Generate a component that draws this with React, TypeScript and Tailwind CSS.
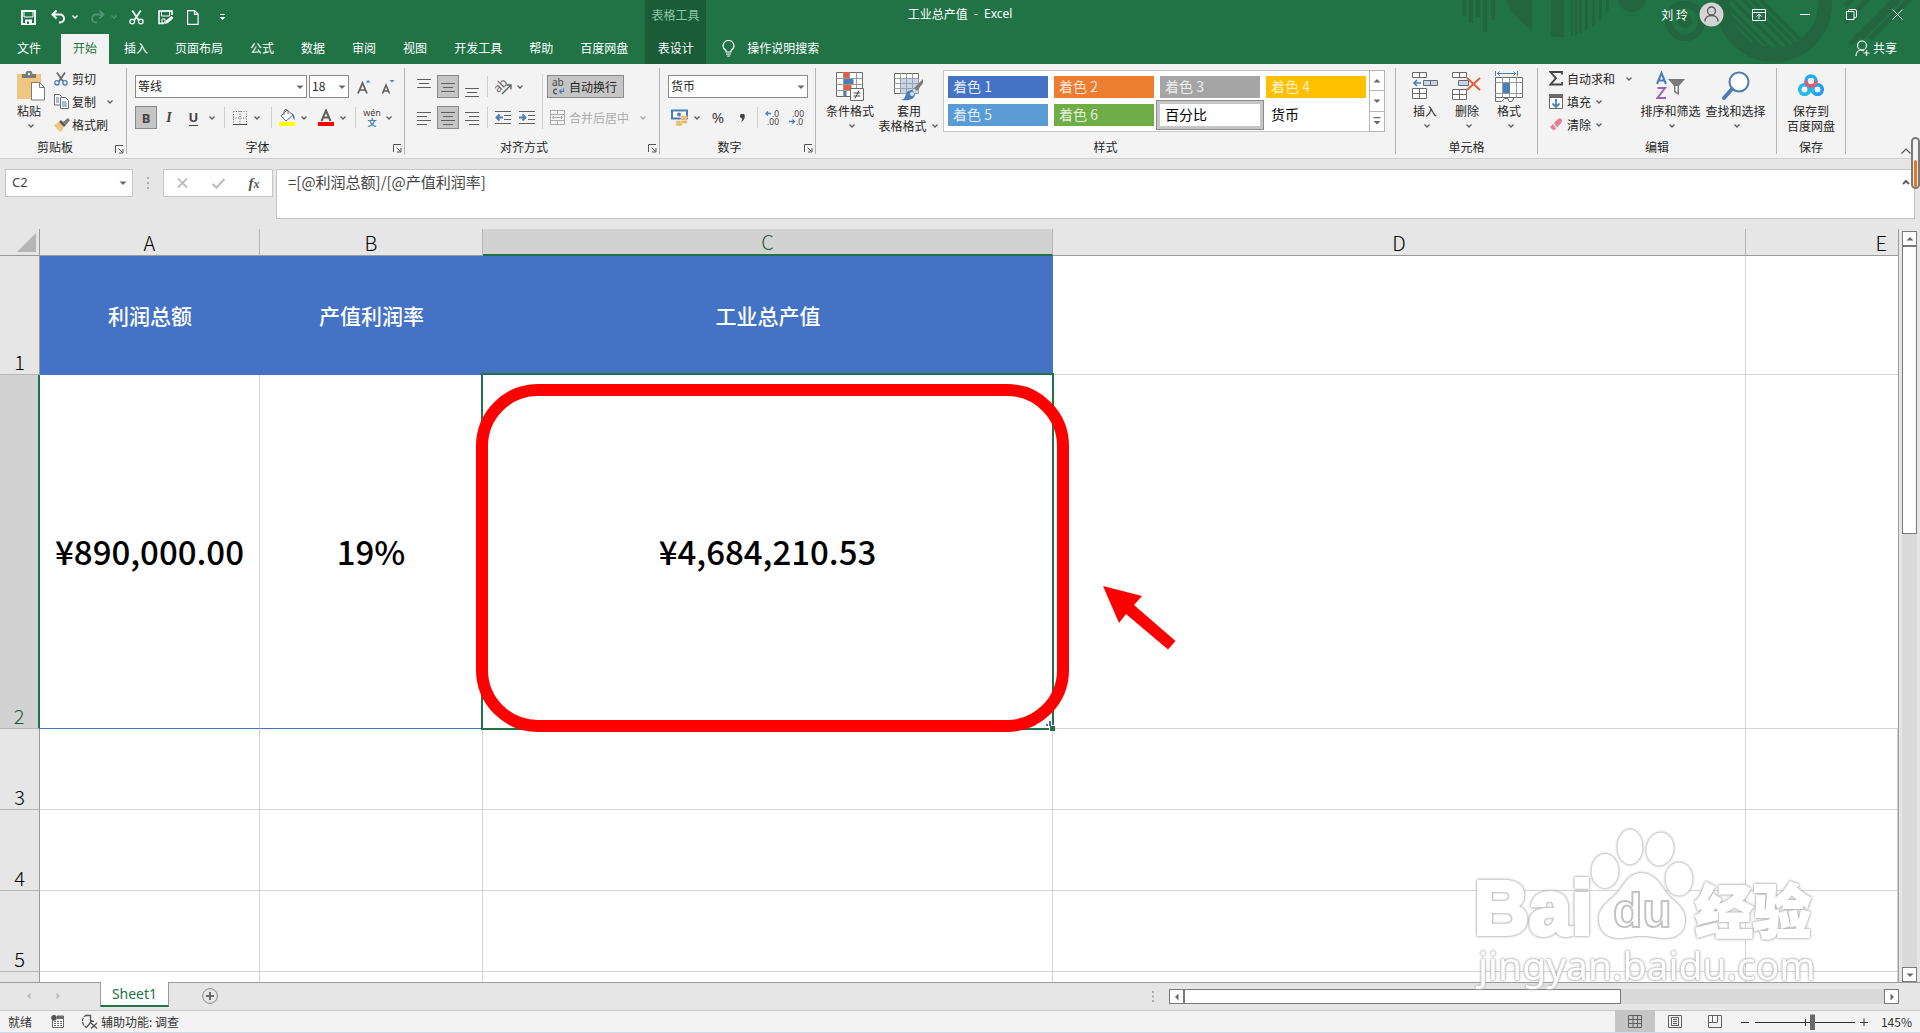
import React from "react";

type Kids = { children?: React.ReactNode; className?: string };

const GRAY = "#6a6a6a";
const BLUE = "#4a7fb5";

function Chev({ className = "", color = "#5f5f5f" }: { className?: string; color?: string }) {
  return (
    <svg width="10" height="6" viewBox="0 0 10 6" className={"shrink-0 " + className} aria-hidden="true">
      <path d="M2.5 1.5 5 4l2.5-2.5" fill="none" stroke={color} strokeWidth="1.3" />
    </svg>
  );
}

function Tri({ dir = "down", color = "#6a6a6a" }: { dir?: "down" | "up" | "left" | "right"; color?: string }) {
  const d = {
    down: "M0.5 2.5h7L4 6z",
    up: "M0.5 5.5h7L4 2z",
    left: "M5.5 0.5v7L2 4z",
    right: "M2.5 0.5v7L6 4z",
  }[dir];
  return (
    <svg width="8" height="8" viewBox="0 0 8 8" className="shrink-0" aria-hidden="true">
      <path d={d} fill={color} />
    </svg>
  );
}

function TinySep({ className = "" }: { className?: string }) {
  return <span className={"h-[21px] w-px shrink-0 bg-[#d0d0d0] " + className} />;
}

function Group({ label, width, launcher, children }: { label: string; width: string; launcher?: boolean; children: React.ReactNode }) {
  return (
    <section aria-label={label} className={"flex shrink-0 " + width}>
      <div className="flex min-w-0 flex-1 flex-col">
        <div className="flex h-[72px] items-start">{children}</div>
        <div className="flex h-[23px] items-center">
          <span className="flex-1 text-center">{label}</span>
          {launcher && (
            <button aria-label={label + "设置"} className="flex w-4 items-center justify-end pt-1 pr-[2px]">
              <svg width="9" height="9" viewBox="0 0 9 9">
                <path d="M0.5 8V0.5H8M3.5 3.5l4 4M8 4v4H4" fill="none" stroke="#555" />
              </svg>
            </button>
          )}
        </div>
      </div>
      <span className="mt-1 h-[86px] w-px bg-[#b5b5b5]" />
    </section>
  );
}

function BigButton({ icon, label, second, width, chev = true }: { icon: React.ReactNode; label: string; second?: string; width: string; chev?: boolean }) {
  return (
    <button className={"flex flex-col items-center pt-[7px] leading-[15px] whitespace-nowrap " + width}>
      <span className="flex h-8 items-start justify-center">{icon}</span>
      <span>{label}</span>
      <span className="flex h-[15px] items-center justify-center">
        {second}
        {chev && <Chev className="ml-[3px]" />}
      </span>
    </button>
  );
}

function SmallButton({ icon, label, chev }: { icon: React.ReactNode; label: string; chev?: string }) {
  return (
    <button className="flex h-[23px] items-center whitespace-nowrap">
      <span className="flex w-[18px] items-center">{icon}</span>
      <span>{label}</span>
      {chev && <Chev className={chev} />}
    </button>
  );
}

function IconBtn({ label, active, className = "w-[22px]", children }: Kids & { label: string; active?: boolean }) {
  return (
    <button
      aria-label={label}
      className={
        "flex h-[23px] shrink-0 items-center justify-center " +
        className +
        (active ? " border border-[#8a8a8a] bg-[#c5c5c5]" : "")
      }
    >
      {children}
    </button>
  );
}

function Lines({ rows, stroke = "#5f5f5f" }: { rows: [number, number, number][]; stroke?: string }) {
  return (
    <svg width="14" height="20" viewBox="0 0 14 20">
      {rows.map(([x1, x2, y]) => (
        <path key={y} d={`M${x1} ${y}H${x2}`} stroke={stroke} />
      ))}
    </svg>
  );
}

const Scissors = ({ c1, c2, size = 15 }: { c1: string; c2: string; size?: number }) => (
  <svg width={size} height={size} viewBox="0 0 15 15" fill="none">
    <path d="M3.2 0.5 9.6 10M11.8 0.5 5.4 10" stroke={c1} strokeWidth="1.9" />
    <circle cx="3.2" cy="11.6" r="2.3" stroke={c2} strokeWidth="1.4" />
    <circle cx="11.8" cy="11.6" r="2.3" stroke={c2} strokeWidth="1.4" />
  </svg>
);

function TitleArt() {
  return (
    <svg className="pointer-events-none absolute top-0 right-0" width="470" height="64" viewBox="0 0 470 64" fill="none" aria-hidden="true">
      <defs>
        <clipPath id="disc"><circle cx="110" cy="-20" r="57" /></clipPath>
        <clipPath id="ringInside"><circle cx="324" cy="4" r="45" /></clipPath>
      </defs>
      <g fill="#226540">
        <path d="M12 0h4v16h-4zM19 0h4v23h-4zM26 0h4v17h-4zM33 0h4v32h-4zM41 0h4v20h-4z" />
        <g clipPath="url(#disc)">
          <path d="M56 0h26v40H56zM101 0h13v40h-13zM121 0h2v40h-2zM125 0h2v40h-2zM129 0h3v40h-3zM135 0h3v40h-3zM142 0h3v40h-3zM149 0h3v40h-3zM156 0h3v40h-3z" />
        </g>
        <circle cx="182" cy="-2" r="14" />
        <circle cx="235" cy="21" r="7" />
      </g>
      <g stroke="#226540">
        <circle cx="235" cy="21" r="16.500" strokeWidth="7" />
        <circle cx="324" cy="4" r="51" strokeWidth="14" />
        <g clipPath="url(#ringInside)" strokeWidth="3.500">
          <path d="M270-2l60 60M281-2l60 60M289-4l60 60M298-4l60 60M307-4l60 60M262-2l60 60" />
        </g>
        <path d="M395 6l8-8M395 22l24-24M400 44l46-46M411 38l38-38M420 39l45-45" strokeWidth="5" />
      </g>
    </svg>
  );
}

function TitleBar() {
  const tabs = ["插入", "页面布局", "公式", "数据", "审阅", "视图", "开发工具", "帮助", "百度网盘"];
  return (
    <header className="relative shrink-0 bg-[#217346] text-white">
      <TitleArt />
      <div className="relative flex h-[34px]">
        <div className="flex flex-1">
          <div className="flex w-[645px] shrink-0 items-center pl-[21px]">
            <button aria-label="保存" className="w-[30px]">
              <svg width="15" height="15" viewBox="0 0 15 15" fill="none"><path d="M1 1h13v13H1z" stroke="#fff" strokeWidth="1.800" /><path d="M3 1h9v6H3z" stroke="#fff" strokeWidth="1" /><path d="M4 9.500h7V14H4z" fill="#fff" /><path d="M6 11.500h2V14H6z" fill="#217346" /></svg>
            </button>
            <button aria-label="撤消" className="w-[18px]">
              <svg width="15" height="14" viewBox="0 0 15 14" fill="none" stroke="#fff" strokeWidth="2"><path d="M1.500 4.500h7.500a4 4 0 0 1 0 8H8M5.500 0.500l-4 4 4 4" /></svg>
            </button>
            <Chev color="#fff" className="ml-px" />
            <button aria-label="恢复" className="ml-[10px] w-[18px]">
              <svg width="15" height="14" viewBox="0 0 15 14" fill="none" stroke="#4f9470" strokeWidth="1.800"><path d="M13.500 4.500H6a4 4 0 0 0 0 8H7M9.500 0.500l4 4-4 4" /></svg>
            </button>
            <Chev color="#4f9470" className="ml-px" />
            <button aria-label="剪切" className="ml-[10px] w-[29px]"><Scissors c1="#e8f2ec" c2="#e8f2ec" /></button>
            <button aria-label="另存为" className="w-[29px]">
              <svg width="16" height="15" viewBox="0 0 16 15" fill="none"><path d="M6 13.500H1V1h13v4" stroke="#fff" strokeWidth="1.600" /><path d="M3.500 1h8v5h-8zM4 9h3v4H4z" stroke="#fff" /><path d="M7 14l1-3.500L13.500 6 15.500 8 10 13z" fill="#fff" /></svg>
            </button>
            <button aria-label="新建" className="w-[32px]">
              <svg width="12" height="15" viewBox="0 0 12 15" fill="none" stroke="#fff" strokeWidth="1.200"><path d="M0.600 0.600h7l3.500 3.500v10.200H0.600zM7.500 0.600v3.700h3.600" /></svg>
            </button>
            <button aria-label="自定义快速访问工具栏">
              <svg width="7" height="7" viewBox="0 0 7 7" fill="#fff"><path d="M1 0h5v1H1zM0.500 3h6L3.500 6z" /></svg>
            </button>
          </div>
          <div className="flex w-[61px] items-start justify-center bg-[#1a5c38] pt-[6px] leading-[18px] text-[#8fc3a5]">表格工具</div>
        </div>
        <h1 className="flex h-[26px] items-end leading-[24px] whitespace-pre">工业总产值<span className="font-['Noto_Sans']">{"  -  Excel"}</span></h1>
        <div className="flex flex-1 items-start justify-end pt-[2px]">
          <button className="flex h-[25px] items-center whitespace-nowrap">
            刘 玲
            <svg className="ml-[11px]" width="25" height="25" viewBox="0 0 25 25" fill="none"><circle cx="12.500" cy="12.500" r="12" fill="#d4d4d4" /><circle cx="12.500" cy="9" r="4" stroke="#555" strokeWidth="1.300" /><path d="M6 19.500c0-4 3-6 6.500-6s6.500 2 6.500 6" stroke="#555" strokeWidth="1.300" /></svg>
          </button>
          <button aria-label="功能区显示选项" className="ml-[18px] flex h-[25px] w-[34px] items-center justify-center"><svg width="14" height="12" viewBox="0 0 14 12" fill="none" stroke="#fff"><path d="M0.500 0.500h13v11H0.500zM0.500 3.500h13M7 10V5.500M4.500 7.500 7 5l2.500 2.500" /></svg></button>
          <button aria-label="最小化" className="ml-[12px] flex h-[25px] w-[34px] items-center justify-center"><svg width="10" height="2" viewBox="0 0 10 2"><path d="M0 0h10v1H0z" fill="#fff" /></svg></button>
          <button aria-label="还原" className="ml-[12px] flex h-[25px] w-[34px] items-center justify-center"><svg width="11" height="11" viewBox="0 0 11 11" fill="none" stroke="#fff"><path d="M0.500 2.500h7.500v8H0.500zM2.500 2.500V1.500a1 1 0 0 1 1-1h5.500a1.500 1.500 0 0 1 1.500 1.500v5.500a1 1 0 0 1-1 1H8" /></svg></button>
          <button aria-label="关闭" className="mr-[6px] ml-[12px] flex h-[25px] w-[34px] items-center justify-center"><svg width="11" height="11" viewBox="0 0 11 11" stroke="#fff"><path d="M0.500 0.500l10 10M10.500 0.500l-10 10" /></svg></button>
        </div>
      </div>
      <nav className="relative flex h-[30px] items-stretch leading-[26px] whitespace-nowrap">
        <button className="mr-2 ml-[5px] px-3 pb-[2px]">文件</button>
        <button className="mr-[3px] bg-[#f3f3f3] px-3 pb-[2px] text-[#217346]">开始</button>
        {tabs.map((t) => (
          <button key={t} className="mr-[3px] px-3 pb-[2px]">{t}</button>
        ))}
        <button className="ml-[2px] w-[61px] bg-[#1a5c38] px-3 pb-[2px]">表设计</button>
        <button className="ml-4 flex items-center pb-px">
          <svg width="13" height="17" viewBox="0 0 13 17" fill="none" stroke="#fff" strokeWidth="1.200"><path d="M4 12v-1.500C2.500 9.500 1 8 1 6a5.500 5.500 0 0 1 11 0c0 2-1.500 3.500-3 4.500V12zM4 14h5M5 16h3" /></svg>
          <span className="ml-3 pb-px">操作说明搜索</span>
        </button>
        <span className="flex-1" />
        <button className="mr-[23px] flex items-center pb-px">
          <svg width="15" height="17" viewBox="0 0 15 17" fill="none" stroke="#fff" strokeWidth="1.200"><circle cx="7" cy="5.500" r="4.500" /><path d="M1 16c0-4 2-6 6-6l2 1M11.500 10v6M8.500 13h6" /></svg>
          <span className="ml-[3px] pb-px">共享</span>
        </button>
      </nav>
    </header>
  );
}

function ClipboardGroup() {
  return (
    <Group label="剪贴板" width="w-[127px]" launcher>
      <BigButton
        width="ml-2 w-[42px]"
        label="粘贴"
        icon={
          <svg className="ml-[3px]" width="28" height="31" viewBox="0 0 28 31" fill="none">
            <path d="M0 3h24v25H0z" fill="#efc780" />
            <path d="M5 7V3h3.500a3.500 3.500 0 0 1 7 0H19v4z" fill="#7a7a7a" />
            <circle cx="12" cy="3" r="1.200" fill="#f3f3f3" />
            <path d="M14.500 11.500h8l5 5v12.500h-13z" fill="#fff" stroke="#7a7a7a" />
            <path d="M22.500 11.500v5h5" stroke="#7a7a7a" />
          </svg>
        }
      />
      <div className="ml-1 flex flex-col pt-[3px]">
        <SmallButton icon={<Scissors c1="#6a6a6a" c2={BLUE} size={14} />} label="剪切" />
        <SmallButton
          chev="ml-[9px]"
          label="复制"
          icon={
            <svg width="15" height="15" viewBox="0 0 15 15" fill="#fff" stroke={GRAY}>
              <path d="M0.500 0.500h5l2 2v8.500h-7z" /><path d="M6.500 3.500h5l3 3v8h-8z" /><path d="M2 4h3M2 6h3M2 8h3M8 8h4M8 10h5M8 12h5" stroke={BLUE} />
            </svg>
          }
        />
        <SmallButton
          label="格式刷"
          icon={
            <svg width="16" height="14" viewBox="0 0 16 14">
              <path d="M0 7l5-3 5 5-3 5C4 13 2 10 0 7z" fill="#efc780" /><path d="M5 4l2-2 5 5-2 2z" fill="#5a5a5a" /><path d="M9 4l5-4 2 2-4 5z" fill="#7a7a7a" />
            </svg>
          }
        />
      </div>
    </Group>
  );
}

function Combo({ label, value, options, width }: { label: string; value: string; options: string[]; width: string }) {
  return (
    <div className={"relative flex h-[23px] items-center border border-[#8a8a8a] bg-white " + width}>
      <select aria-label={label} defaultValue={value} className="h-full w-full appearance-none bg-transparent pr-3 pb-px pl-[2px] leading-[20px] outline-none">
        {options.map((o) => <option key={o}>{o}</option>)}
      </select>
      <span className="pointer-events-none absolute right-[2px]"><Tri /></span>
    </div>
  );
}

function FontGroup() {
  return (
    <Group label="字体" width="w-[278px]" launcher>
      <div className="flex flex-col gap-2 pt-[11px] pl-2">
        <div className="flex items-center">
          <Combo label="字体" value="等线" options={["等线", "宋体"]} width="w-[172px]" />
          <Combo label="字号" value="18" options={["18", "20"]} width="ml-[2px] w-[40px]" />
          <IconBtn label="增大字号" className="ml-[3px] w-[24px]">
            <svg width="14" height="16" viewBox="0 0 14 16"><path d="M1 14.500 5.500 4 10 14.500M2.800 11h5.400" fill="none" stroke="#5f5f5f" strokeWidth="1.700" /><path d="M9 3.500 11 1l2.500 2.500z" fill={BLUE} /></svg>
          </IconBtn>
          <IconBtn label="减小字号" className="w-[24px]">
            <svg width="14" height="16" viewBox="0 0 14 16"><path d="M1.500 14.500 5 6l3.500 8.500M2.800 12h4.400" fill="none" stroke="#5f5f5f" strokeWidth="1.600" /><path d="M8.500 1h5L11 3.500z" fill={BLUE} /></svg>
          </IconBtn>
        </div>
        <div className="flex items-center text-[14px] leading-[20px] text-[#444]">
          <IconBtn label="加粗" active><span className="font-['Noto_Sans'] text-[13px] font-bold">B</span></IconBtn>
          <IconBtn label="倾斜" className="w-[24px]"><span className="font-['Liberation_Serif'] font-bold italic">I</span></IconBtn>
          <IconBtn label="下划线" className="w-[25px]"><span className="border-b border-[#444] font-['Noto_Sans'] text-[13px] leading-[15px] font-bold">U</span></IconBtn>
          <Chev className="ml-px" />
          <TinySep className="ml-[7px]" />
          <IconBtn label="边框" className="ml-[4px] w-[22px]">
            <svg width="14" height="14" viewBox="0 0 14 14" fill="none" stroke={GRAY}><path d="M0.500 0.500h13v13M0.500 0.500v13M7 0v13M0 7h13" strokeDasharray="1 1.500" /><path d="M0 13.500h14" stroke="#444" /></svg>
          </IconBtn>
          <Chev className="ml-px" />
          <TinySep className="ml-[9px]" />
          <IconBtn label="填充颜色" className="ml-[4px] w-[22px]">
            <svg width="17" height="17" viewBox="0 0 17 17"><path d="M8 1 2 7l5 5 7-6z" fill="#fff" stroke="#6a6a6a" /><path d="M5 6V2.500a2 2 0 0 1 4 0V5" fill="none" stroke="#6a6a6a" /><path d="M12 4c4 1 4 5 3.500 7-1-1-2-3-2-5z" fill={BLUE} /><path d="M0 13h16v4H0z" fill="#ff0" /></svg>
          </IconBtn>
          <Chev className="ml-px" />
          <IconBtn label="字体颜色" className="ml-[6px] w-[22px]">
            <svg width="17" height="17" viewBox="0 0 17 17"><path d="M3.500 12 8 1.500 12.500 12M5 8.500h6" fill="none" stroke="#5f5f5f" strokeWidth="2" /><path d="M0 13h16v4H0z" fill="#f00" /></svg>
          </IconBtn>
          <Chev className="ml-px" />
          <TinySep className="ml-[7px]" />
          <IconBtn label="拼音" className="ml-[4px] w-[24px]">
            <span className="flex flex-col items-center"><span className="font-['Noto_Sans'] text-[9px] leading-[10px]">wén</span><span className="text-[9px] leading-[10px] font-bold text-[#4a7fb5]">文</span></span>
          </IconBtn>
          <Chev />
        </div>
      </div>
    </Group>
  );
}

function AlignGroup() {
  const C = "#5f5f5f";
  return (
    <Group label="对齐方式" width="w-[255px]" launcher>
      <div className="flex flex-col gap-2 pt-[11px] pl-2">
        <div className="flex w-[129px] items-center gap-[2px]">
          <IconBtn label="顶端对齐"><Lines rows={[[0, 14, 2.5], [2, 12, 6.5], [0, 14, 10.5]]} /></IconBtn>
          <IconBtn label="垂直居中" active><Lines rows={[[0, 14, 6.5], [2, 12, 10.5], [0, 14, 14.5]]} /></IconBtn>
          <IconBtn label="底端对齐"><Lines rows={[[0, 14, 11.5], [2, 12, 15.5], [0, 14, 19.5]]} /></IconBtn>
          <TinySep className="ml-[2px]" />
          <IconBtn label="方向" className="ml-[2px] w-[22px]">
            <svg width="18" height="17" viewBox="0 0 18 17" fill="none" stroke={C} className="overflow-visible"><text x="0" y="13" transform="rotate(-45 5 9)" fontSize="12" fontFamily="Noto Sans" fill={C} stroke="none">ab</text><path d="M8 16 16.500 7.500M12.500 7H17v4.500" strokeWidth="1.300" /></svg>
          </IconBtn>
          <Chev className="-ml-px" />
        </div>
        <div className="flex items-center gap-[2px]">
          <IconBtn label="左对齐"><Lines rows={[[0, 14, 4.5], [0, 10, 8.5], [0, 14, 12.5], [0, 10, 16.5]]} /></IconBtn>
          <IconBtn label="居中" active><Lines rows={[[0, 14, 4.5], [2, 12, 8.5], [0, 14, 12.5], [2, 12, 16.5]]} /></IconBtn>
          <IconBtn label="右对齐"><Lines rows={[[0, 14, 4.5], [4, 14, 8.5], [0, 14, 12.5], [4, 14, 16.5]]} /></IconBtn>
          <TinySep className="ml-[2px]" />
          <IconBtn label="减少缩进量" className="ml-[2px] w-[22px]"><svg width="16" height="14" viewBox="0 0 16 14" fill="none" stroke={C}><path d="M0 0.500h16M9 4.500h7M9 8.500h7M0 12.500h16" /><path d="M8 6.500H1.500M4.500 3.500l-3 3 3 3" stroke={BLUE} strokeWidth="1.800" /></svg></IconBtn>
          <IconBtn label="增加缩进量"><svg width="16" height="14" viewBox="0 0 16 14" fill="none" stroke={C}><path d="M0 0.500h16M9 4.500h7M9 8.500h7M0 12.500h16" /><path d="M0 6.500h6.500M3.500 3.500l3 3-3 3" stroke={BLUE} strokeWidth="1.800" /></svg></IconBtn>
        </div>
      </div>
      <span className="mt-[10px] h-[55px] w-px shrink-0 bg-[#d0d0d0]" />
      <div className="flex flex-col gap-2 pt-[11px] pl-1">
        <button className="flex h-[23px] w-[77px] items-center border border-[#8a8a8a] bg-[#c5c5c5] pl-1 whitespace-nowrap">
          <svg width="13" height="18" viewBox="0 0 13 18" className="overflow-visible"><text x="0" y="8" fontSize="10" fontFamily="Noto Sans" fill="#444">ab</text><path d="M5 11.500a2.300 2.300 0 1 0 0 4" fill="none" stroke="#444" strokeWidth="1.200" /><path d="M11.500 10.500v3H8M9.500 11.500l-2 2 2 2" fill="none" stroke={BLUE} strokeWidth="1.200" /></svg>
          <span className="ml-1">自动换行</span>
        </button>
        <button disabled className="flex h-[23px] items-center pl-[3px] whitespace-nowrap text-[#ababab]">
          <svg width="15" height="15" viewBox="0 0 15 15" fill="none" stroke="#ababab"><path d="M0.500 0.500h14v14H0.500zM0.500 4.500h14M0.500 10.500h14M7.500 0.500v4M7.500 10.500v4M2.500 7.500h10M4 6 2.500 7.500 4 9M11 6l1.500 1.500L11 9" /></svg>
          <span className="ml-1">合并后居中</span>
          <Chev color="#ababab" className="ml-[9px]" />
        </button>
      </div>
    </Group>
  );
}

function NumberGroup() {
  const Dec = ({ up }: { up?: boolean }) => (
    <svg width="16" height="15" viewBox="0 0 16 15" fontFamily="Noto Sans" fontSize="8.500" fill="#444" className="overflow-visible">
      {up ? <text x="7" y="7">.0</text> : <text x="3" y="7">.00</text>}
      {up ? <text x="2" y="15">.00</text> : <text x="7" y="15">.0</text>}
      <path d={up ? "M6 3.500H1M3 1.500l-2 2 2 2" : "M0 11.500h5.500M3.500 9.500l2 2-2 2"} fill="none" stroke={BLUE} strokeWidth="1.300" />
    </svg>
  );
  return (
    <Group label="数字" width="w-[156px]" launcher>
      <div className="flex flex-col gap-2 pt-[11px] pl-2">
        <Combo label="数字格式" value="货币" options={["货币", "常规"]} width="w-[140px]" />
        <div className="flex items-center">
          <IconBtn label="会计数字格式">
            <svg width="17" height="17" viewBox="0 0 17 17"><path d="M1 1.500h15v8H1z" fill="#fff" stroke={BLUE} strokeWidth="2" /><circle cx="8" cy="5.500" r="2" fill={BLUE} /><g fill="#e9b35c" stroke="#f3f3f3" strokeWidth=".5"><ellipse cx="13" cy="8" rx="3.500" ry="1.600" /><ellipse cx="13" cy="10.500" rx="3.500" ry="1.600" /><ellipse cx="8" cy="13" rx="3.500" ry="1.600" /><ellipse cx="13" cy="13" rx="3.500" ry="1.600" /><ellipse cx="8" cy="15.400" rx="3.500" ry="1.600" /></g></svg>
          </IconBtn>
          <Chev className="ml-[2px]" />
          <IconBtn label="百分比样式" className="ml-[5px] w-[22px]"><span className="font-['Noto_Sans'] text-[15px] text-[#444]">%</span></IconBtn>
          <IconBtn label="千位分隔样式" className="ml-[2px] w-[22px]"><svg width="5" height="8" viewBox="0 0 5 8"><path d="M0 2a2.200 2.200 0 0 1 4.800 0C4.800 5 3.500 7 1 8c1-1.500 1.300-2.500 1.200-3.700C1 4.500 0 3.500 0 2z" fill="#444" /></svg></IconBtn>
          <TinySep className="ml-[4px]" />
          <IconBtn label="增加小数位数" className="ml-1 w-[22px]"><Dec up /></IconBtn>
          <IconBtn label="减少小数位数" className="ml-[2px] w-[22px]"><Dec /></IconBtn>
        </div>
      </div>
    </Group>
  );
}

function StylesGroup() {
  const styles: [string, string][] = [
    ["着色 1", "bg-[#4472c4] text-[#e3eaf6]"],
    ["着色 2", "bg-[#ed7d31] text-[#fbe5d6]"],
    ["着色 3", "bg-[#a5a5a5] text-[#ededed]"],
    ["着色 4", "bg-[#ffc000] text-[#fff2cc]"],
    ["着色 5", "bg-[#5b9bd5] text-[#deebf7]"],
    ["着色 6", "bg-[#70ad47] text-[#e2f0d9]"],
    ["百分比", "bg-white text-black outline-3 outline-[#c6c6c6] ring-4 ring-[#8a8a8a]"],
    ["货币", "bg-white text-black"],
  ];
  return (
    <Group label="样式" width="w-[580px]">
      <BigButton
        width="ml-2 w-[52px]"
        label="条件格式"
        icon={
          <svg width="28" height="31" viewBox="0 0 28 31" fill="none">
            <path d="M0.500 1.500h26v24h-26z" fill="#fff" stroke={GRAY} />
            <path d="M7.500 1v6.500h6V1z" fill="#e0603c" /><path d="M7.500 8h10v5h-10z" fill={BLUE} /><path d="M7.500 14h8v5h-8z" fill="#e0603c" /><path d="M7.500 20h3v5h-3z" fill={BLUE} />
            <path d="M0.500 7.500h26M0.500 13.500h26M0.500 19.500h26M7.500 1.500v24M13.500 1.500v6M20.500 1.500v24" stroke="#9a9a9a" />
            <path d="M14.500 17.500h13v12h-13z" fill="#fff" stroke={GRAY} /><path d="M17.500 22h7M17.500 25h7M23 19.500l-4 8" stroke="#444" />
          </svg>
        }
      />
      <BigButton
        width="w-[66px]"
        label="套用"
        second="表格格式"
        icon={
          <svg width="30" height="31" viewBox="0 0 30 31" fill="none">
            <path d="M0.500 2.500h24v20h-24z" fill="#fff" stroke={GRAY} /><path d="M6.500 7.500h18v15h-18z" fill="#c5d6ea" />
            <path d="M0.500 7.500h24M0.500 12.500h24M0.500 17.500h24M6.500 2.500v20M12.500 2.500v20M18.500 2.500v20" stroke="#a0a0a0" />
            <path d="M29 8l-9 9 3 3 6-8z" fill="#7a7a7a" /><path d="M18 19c-4 0-6 3-6.500 5.500C11 27 9 28.500 7 29c6 1 14 0 14-6z" fill={BLUE} /><circle cx="18" cy="23" r="2" fill="#dce8f4" />
          </svg>
        }
      />
      <div className="mt-[6px] ml-px flex h-[62px] border border-[#c6c6c6] bg-white">
        <div className="grid grid-cols-4 gap-[6px] py-[5px] pr-[3px] pl-1">
          {styles.map(([t, c]) => (
            <button key={t} className={"h-[22px] w-[100px] pb-[2px] pl-[5px] text-left text-[14px] leading-[20px] " + c}>{t}</button>
          ))}
        </div>
        <div className="-my-px -mr-px flex w-4 flex-col divide-y divide-[#b5b5b5] border border-[#b5b5b5]">
          <button aria-label="上一行" className="flex flex-1 items-center justify-center"><Tri dir="up" /></button>
          <button aria-label="下一行" className="flex flex-1 items-center justify-center"><Tri /></button>
          <button aria-label="其他样式" className="flex flex-1 items-center justify-center"><svg width="8" height="8" viewBox="0 0 8 8" fill="#6a6a6a"><path d="M0.500 0h7v1.200h-7zM0.500 4h7L4 7.500z" /></svg></button>
        </div>
      </div>
    </Group>
  );
}

function CellsGroup() {
  return (
    <Group label="单元格" width="w-[142px]">
      <BigButton width="ml-2 w-[42px]" label="插入" icon={
        <svg width="27" height="31" viewBox="0 0 27 31" fill="#fff" stroke={GRAY}><path d="M0.500 1.500h14v5h-14zM7.500 1.500v5M0.500 17.500h14v10h-14zM0.500 22.500h14M7.500 17.500v10" /><path d="M11.500 9.500h14v5h-14zM18.500 9.500v5" fill="#c5d6ea" /><path d="M9 12H2M5 9l-3 3 3 3" stroke={BLUE} strokeWidth="1.700" fill="none" /></svg>} />
      <BigButton width="w-[42px]" label="删除" icon={
        <svg width="30" height="31" viewBox="0 0 30 31" fill="#fff" stroke={GRAY}><path d="M0.500 1.500h14v5h-14zM7.500 1.500v5M0.500 18.500h14v10h-14zM0.500 23.500h14M7.500 18.500v10" /><path d="M6.500 9.500h10v5h-10z" fill="#c5d6ea" /><path d="M15 7l13 12M28 7 15 19" stroke="#e0603c" strokeWidth="2" fill="none" /></svg>} />
      <BigButton width="w-[42px]" label="格式" icon={
        <svg width="28" height="31" viewBox="0 0 28 31" fill="#fff" stroke={GRAY}><path d="M0.500 6.500h27v20h-27z" /><path d="M7.500 6.500v20M14.500 6.500v20M21.500 6.500v20M0.500 11.500h27M0.500 22.500h27" stroke="#9a9a9a" /><path d="M8 12h7v10H8z" fill={BLUE} stroke="none" /><path d="M0.500 27v3.500h6l3-3h3.500l1 3h3l2-3.500" /><path d="M0.500 0v5M22.500 0v5M2 2.500h19M4.500 0.500l-2 2 2 2M18.500 0.500l2 2-2 2" stroke={BLUE} fill="none" /></svg>} />
    </Group>
  );
}

function EditGroup() {
  return (
    <Group label="编辑" width="w-[239px]">
      <div className="ml-[11px] flex w-[89px] flex-col pt-[3px]">
        <SmallButton label="自动求和" chev="ml-[9px]" icon={<svg width="14" height="15" viewBox="0 0 14 15"><path d="M13 3.500V1H1.500L7 7.200 1.500 13.500H13V11" fill="none" stroke="#444" strokeWidth="1.800" /></svg>} />
        <SmallButton label="填充" chev="ml-[3px]" icon={<svg width="14" height="15" viewBox="0 0 14 15" fill="none"><path d="M0.500 0.500h13v14H0.500z" fill="#fff" stroke={GRAY} /><path d="M0 0h14v4H0z" fill={GRAY} /><path d="M7 5v8M3.500 9.500 7 13l3.500-3.500" stroke={BLUE} strokeWidth="1.800" /></svg>} />
        <SmallButton label="清除" chev="ml-[3px]" icon={<svg width="14" height="13" viewBox="0 0 14 13"><path d="M5 5 9.500 0.500h3L13 4 8 9.500z" fill="#e77f93" /><path d="M4 6l3 4.500L4.500 12.500 1 9z" fill="#e77f93" /></svg>} />
      </div>
      <BigButton width="w-[65px]" label="排序和筛选" icon={
        <svg width="30" height="31" viewBox="0 0 30 31" fill="none"><path d="M1 13 5.500 2 10 13M2.500 9.500h6" stroke={BLUE} strokeWidth="2" /><path d="M1.500 17H9L1.500 27H10" stroke="#9b63b5" strokeWidth="2" /><path d="M12 8h17l-6 7v9l-5-3v-6z" fill="#7a7a7a" /><path d="M19.500 15v5l2 1.500V15z" fill="#fff" /></svg>} />
      <BigButton width="w-[65px]" label="查找和选择" icon={
        <svg width="28" height="31" viewBox="0 0 28 31" fill="none"><circle cx="17" cy="11" r="9.500" fill="#fff" stroke={BLUE} strokeWidth="2" /><path d="M10 18 2 27" stroke={BLUE} strokeWidth="4" strokeLinecap="round" /></svg>} />
    </Group>
  );
}

function SaveGroup() {
  return (
    <Group label="保存" width="w-[69px]">
      <BigButton width="w-[68px]" label="保存到" second="百度网盘" chev={false} icon={
        <svg width="26" height="31" viewBox="0 0 26 31" fill="none" strokeWidth="3.500"><circle cx="6.500" cy="18.500" r="4.800" stroke="#23b7ea" /><circle cx="19.500" cy="18.500" r="4.800" stroke="#1a9cf8" /><path d="M10 22 15.500 15M10 15l6 7" stroke="#23b7ea" /><circle cx="13" cy="10" r="5" stroke="#22a9f0" /><path d="M8 10a5 5 0 0 0 10 0" stroke="#f0566b" /></svg>} />
    </Group>
  );
}

function Ribbon() {
  return (
    <div className="relative flex h-[95px] shrink-0 border-b border-[#d0d0d0] bg-[#f3f3f3] text-[#262626]">
      <ClipboardGroup />
      <FontGroup />
      <AlignGroup />
      <NumberGroup />
      <StylesGroup />
      <CellsGroup />
      <EditGroup />
      <SaveGroup />
      <div className="flex flex-1 items-end justify-end pr-[9px] pb-1">
        <button aria-label="折叠功能区"><svg width="10" height="6" viewBox="0 0 10 6"><path d="M0.500 5.500 5 1l4.500 4.500" fill="none" stroke="#555" strokeWidth="1.200" /></svg></button>
      </div>
      <span className="absolute top-[73px] right-0 z-10 flex h-[52px] w-[9px] items-end justify-center rounded-full border-2 border-[#7a7a7a] bg-[#f3f3f3]">
        <span className="h-[27px] w-[3px] rounded-full bg-[#f5701f]" />
      </span>
    </div>
  );
}

function FormulaBar() {
  return (
    <div className="flex shrink-0 items-start bg-[#e6e6e6] pt-[10px] pr-[5px] pb-[10px] pl-[5px]">
      <div className="flex h-7 w-[128px] items-center border border-[#c6c6c6] bg-white pr-[5px]">
        <input aria-label="名称框" defaultValue="C2" className="min-w-0 flex-1 bg-transparent pl-[6px] font-['Noto_Sans'] text-[13px] text-[#444] outline-none" />
        <Tri />
      </div>
      <span className="flex h-7 w-[30px] items-center justify-center">
        <svg width="2" height="12" viewBox="0 0 2 12" fill="#ababab"><path d="M0 0h2v2H0zM0 5h2v2H0zM0 10h2v2H0z" /></svg>
      </span>
      <div className="flex h-7 w-[110px] items-center border border-[#c6c6c6] bg-white">
        <button aria-label="取消" className="flex w-9 justify-center"><svg width="11" height="10" viewBox="0 0 11 10"><path d="M1 0.500l9 9M10 0.500l-9 9" stroke="#bdbdbd" strokeWidth="1.800" /></svg></button>
        <button aria-label="输入" className="flex w-9 justify-center"><svg width="13" height="11" viewBox="0 0 13 11"><path d="M0.500 6 4.500 9.500 12.500 1" fill="none" stroke="#bdbdbd" strokeWidth="2.200" /></svg></button>
        <button aria-label="插入函数" className="flex w-9 items-baseline justify-center font-['Liberation_Serif'] text-[15px] font-bold text-[#555] italic">f<span className="text-[12px]">x</span></button>
      </div>
      <div className="ml-[3px] flex h-[50px] flex-1 border border-[#c6c6c6] bg-white">
        <textarea aria-label="编辑栏" defaultValue="=[@利润总额]/[@产值利润率]" className="flex-1 resize-none bg-transparent py-px pl-[11px] text-[15px] leading-[22px] text-[#444] outline-none" />
        <button aria-label="折叠编辑栏" className="flex h-6 w-3 items-center"><svg width="8" height="6" viewBox="0 0 8 6"><path d="M1 5 4 2l3 3" fill="none" stroke="#5f5f5f" strokeWidth="2" /></svg></button>
      </div>
    </div>
  );
}

function Grid() {
  const line = "border-r border-b border-[#d4d4d4]";
  const rowHead = "border-r border-[#9b9b9b] border-b border-b-[#b5b5b5] p-0 text-center align-bottom font-light leading-[24px] text-[20px]";
  const colHead = "border-r border-[#b5b5b5] border-b border-b-[#9b9b9b] bg-[#e6e6e6] p-0 font-light text-[20px] leading-[25px]";
  const head = "bg-[#4472c4] p-0 text-[21px] font-medium text-white";
  const value = "p-0 pt-px text-[33px] font-medium text-black text-center";
  const empties = ["B", "C", "D", "E"];
  return (
    <div className="flex min-h-0 flex-1 bg-[#e6e6e6]">
      <div className="relative min-w-0 flex-1 overflow-hidden border-r border-[#9b9b9b]">
        <table className="w-full table-fixed border-separate border-spacing-0 bg-white">
          <colgroup>
            <col className="w-[40px]" /><col className="w-[220px]" /><col className="w-[223px]" /><col className="w-[570px]" /><col className="w-[693px]" /><col />
          </colgroup>
          <thead>
            <tr className="h-[27px]">
              <th className="border-r border-b border-[#9b9b9b] bg-[#e6e6e6] p-0 pr-[3px] pb-[3px] align-bottom">
                <svg className="ml-auto" width="19" height="19" viewBox="0 0 19 19"><path d="M19 0v19H0z" fill="#b5b5b5" /></svg>
              </th>
              <th className={colHead}>A</th>
              <th className={colHead}>B</th>
              <th className="border-r border-b-2 border-[#b5b5b5] border-b-[#217346] bg-[#d2d2d2] p-0 text-[20px] leading-[25px] font-light text-[#1c5c3a]">C</th>
              <th className={colHead}>D</th>
              <th className="border-b border-[#9b9b9b] bg-[#e6e6e6] p-0 pr-[11px] text-right text-[20px] leading-[25px] font-light">E</th>
            </tr>
          </thead>
          <tbody>
            <tr className="h-[119px]">
              <th className={rowHead + " bg-[#e6e6e6]"}>1</th>
              <th className={head}>利润总额</th>
              <th className={head}>产值利润率</th>
              <th className={head}>工业总产值</th>
              <td className={line} /><td className="border-b border-[#d4d4d4]" />
            </tr>
            <tr className="h-[354px]">
              <th className="border-r-2 border-b border-r-[#217346] border-b-[#b5b5b5] bg-[#d2d2d2] p-0 text-center align-bottom text-[20px] leading-[24px] font-light text-[#1c5c3a]">2</th>
              <td className={value + " border-r border-b border-r-[#d4d4d4] border-b-[#4472c4]"}>¥890,000.00</td>
              <td className={value + " border-r border-b border-r-[#d4d4d4] border-b-[#4472c4]"}>19%</td>
              <td className={value + " relative " + line}>
                ¥4,684,210.53
                <span className="pointer-events-none absolute -inset-[2px] z-10 border-2 border-[#217346]">
                  <span className="absolute -right-[3px] -bottom-[3px] size-[6px] border-t border-l border-white bg-[#217346]" />
                  <svg className="absolute right-[1px] bottom-[2px]" width="5" height="5" viewBox="0 0 5 5"><path d="M3 0h2v5H3zM0 3h2v2H0z" fill="#4f63b5" /></svg>
                </span>
                <span className="pointer-events-none absolute top-[9px] -right-[17px] -bottom-[4px] -left-[7px] z-20 rounded-[62px] border-12 border-[#ff0000]" />
              </td>
              <td className={"relative p-0 " + line}>
                <svg className="absolute top-[208px] left-[47px]" width="80" height="70" viewBox="0 0 80 70" aria-hidden="true">
                  <path d="M3 3l39 10-8 9 41.500 36-7.500 8.500L26 31l-7 9z" fill="#ff0000" />
                </svg>
              </td>
              <td className="border-b border-[#d4d4d4]" />
            </tr>
            {[3, 4, 5].map((n) => (
              <tr key={n} className="h-[81px]">
                <th className={rowHead + " bg-[#e6e6e6]"}>{n}</th>
                <td className={line} />
                {empties.map((c) => <td key={c} className={line} />)}
              </tr>
            ))}
            <tr className="h-[81px]">
              <th aria-label="6" className={rowHead + " bg-[#e6e6e6]"} />
              <td className={line} />
              {empties.map((c) => <td key={c} className={line} />)}
            </tr>
          </tbody>
        </table>
      </div>
      <div className="mt-[2px] mr-[3px] ml-[3px] flex w-[15px] flex-col bg-[#dadada]">
        <button aria-label="向上滚动" className="flex h-[15px] items-center justify-center border border-[#7a7a7a] bg-white"><Tri dir="up" /></button>
        <span className="h-[288px] border border-[#7a7a7a] bg-white" />
        <span className="flex-1" />
        <button aria-label="向下滚动" className="flex h-[15px] items-center justify-center border border-[#7a7a7a] bg-white"><Tri /></button>
      </div>
    </div>
  );
}

function SheetBar() {
  return (
    <div className="flex h-[29px] shrink-0 items-start border-t border-b border-t-[#9b9b9b] border-b-[#c6c6c6] bg-[#e6e6e6]">
      <div className="flex h-[26px] w-[100px] items-center gap-[21px] pl-[25px]">
        <button aria-label="上一个工作表"><Tri dir="left" color="#bcbcbc" /></button>
        <button aria-label="下一个工作表"><Tri dir="right" color="#bcbcbc" /></button>
      </div>
      <button className="-mt-px h-[25px] w-[69px] border-x border-b-2 border-x-[#9b9b9b] border-b-[#217346] bg-white font-['Noto_Sans'] text-[14px] leading-[22px] text-[#217346]">Sheet1</button>
      <button aria-label="新工作表" className="ml-[33px] flex h-[26px] items-center">
        <svg width="16" height="16" viewBox="0 0 16 16" fill="none"><circle cx="8" cy="8" r="7.400" stroke="#8a8a8a" /><path d="M8 4v8M4 8h8" stroke="#6a6a6a" strokeWidth="2" /></svg>
      </button>
      <span className="flex-1" />
      <svg className="mt-[8px]" width="2" height="11" viewBox="0 0 2 11" fill="#ababab"><path d="M0 0h2v2H0zM0 4.500h2v2H0zM0 9h2v2H0z" /></svg>
      <div className="mt-[6px] mr-[21px] ml-[15px] flex h-[15px] w-[730px] bg-[#dadada]">
        <button aria-label="向左滚动" className="flex w-[15px] items-center justify-center border border-[#7a7a7a] bg-white"><Tri dir="left" /></button>
        <span className="w-[437px] border border-[#7a7a7a] bg-white" />
        <span className="flex-1" />
        <button aria-label="向右滚动" className="flex w-[15px] items-center justify-center border border-[#7a7a7a] bg-white"><Tri dir="right" /></button>
      </div>
    </div>
  );
}

function StatusBar() {
  return (
    <footer className="flex h-[22px] shrink-0 items-center border-b border-[#cfdcec] bg-[#f3f3f3] leading-[20px] text-[#333]">
      <span className="ml-2">就绪</span>
      <button aria-label="录制宏" className="ml-[19px]">
        <svg width="13" height="13" viewBox="0 0 13 13"><path d="M1.500 4v8.500h11V1H6" fill="#fff" stroke="#6a6a6a" /><path d="M6 1h7v3H6z" fill="#6a6a6a" /><circle cx="3" cy="2.800" r="2.800" fill="#555" /><path d="M3 6.500h8M3 8.500h8M3 10.500h8" stroke="#6a6a6a" strokeDasharray="2 1" /></svg>
      </button>
      <button className="ml-[18px] flex items-center whitespace-nowrap">
        <svg width="16" height="15" viewBox="0 0 16 15" fill="none" stroke="#555" strokeWidth="1.300"><path d="M5 1C-1 3-1 11 5 13.500" strokeDasharray="3.500 1" /><path d="M3.500 1.500h5v4M8.500 5v3.500L5 13M8 6l4 1.500M9 9l6 5.500M15 9l-6 5.500" /></svg>
        <span className="ml-[3px]">辅助功能: 调查</span>
      </button>
      <span className="flex-1" />
      <button aria-label="普通" className="flex h-full w-10 items-center justify-center bg-[#c5c5c5]"><svg width="14" height="13" viewBox="0 0 14 13" fill="none" stroke="#5f5f5f"><path d="M0.500 0.500h13v12H0.500zM0.500 4.500h13M0.500 8.500h13M5 0.500v12M9.500 0.500v12" /></svg></button>
      <button aria-label="页面布局" className="flex h-full w-10 items-center justify-center"><svg width="14" height="13" viewBox="0 0 14 13" fill="none" stroke="#5f5f5f"><path d="M0.500 0.500h13v12H0.500zM3.500 2.500h7v8h-7zM5 4.500h4M5 6.500h4M5 8.500h4" /></svg></button>
      <button aria-label="分页预览" className="flex h-full w-10 items-center justify-center"><svg width="14" height="13" viewBox="0 0 14 13" fill="none" stroke="#5f5f5f"><path d="M0.500 0.500h13v12H0.500zM4.500 0.500v7h5v-7M0.500 7.500h4" /></svg></button>
      <button aria-label="缩小" className="ml-[4px] flex w-3 justify-center"><svg width="8" height="8" viewBox="0 0 8 8"><path d="M0 4.500h8" stroke="#333" /></svg></button>
      <span className="relative ml-[4px] flex h-4 w-[100px] items-center">
        <input type="range" aria-label="显示比例" min="0" max="100" defaultValue="57" className="absolute inset-0 m-0 w-full opacity-0" />
        <svg width="100" height="16" viewBox="0 0 100 16"><path d="M0 8.500h100M50.500 5v7" stroke="#333" /><path d="M55 0.500h5v16h-5z" fill="#6a6a6a" /></svg>
      </span>
      <button aria-label="放大" className="ml-[3px] flex w-3 justify-center"><svg width="8" height="8" viewBox="0 0 8 8"><path d="M0 4.500h8M4 0.500v8" stroke="#333" /></svg></button>
      <span className="mr-2 w-[42px] text-right">145%</span>
    </footer>
  );
}

function Watermark() {
  const shade = "[filter:drop-shadow(0_0_1px_#a8a8a8)_drop-shadow(0_0_1px_#c4c4c4)]";
  return (
    <div className={"pointer-events-none absolute right-[98px] bottom-[40px] z-30 h-[168px] w-[348px] " + shade} aria-hidden="true">
      <svg width="348" height="168" viewBox="0 0 348 168" fill="#fff" className="overflow-visible">
        <text x="0" y="109" fontSize="76" fontWeight="bold" fontFamily="Liberation Sans" stroke="#fff" strokeWidth="4">Bai</text>
        <ellipse cx="131" cy="46" rx="13.500" ry="17" />
        <ellipse cx="156" cy="22" rx="12.500" ry="17.500" />
        <ellipse cx="186" cy="24" rx="13.500" ry="16.500" transform="rotate(10 186 24)" />
        <ellipse cx="205" cy="54" rx="13.500" ry="16.500" />
        <path d="M167 48c12 0 18 9 24 18 6 10 20 14 20 29 0 12-8 18-20 18-9 0-14-2-23-2-10 0-15 2-23 2-11 0-20-6-20-19 0-14 12-18 20-28 6-8 11-18 22-18z" />
        <text x="139" y="102" fontSize="48" fontWeight="bold" fontFamily="Liberation Sans" stroke="#c4c4c4" strokeWidth="2">du</text>
        <text x="221" y="108" fontSize="58" fontWeight="900" fontFamily="Noto Sans CJK SC" stroke="#fff" strokeWidth="2">经验</text>
        <text x="4" y="155" fontSize="39" fontFamily="Noto Sans">jingyan.baidu.com</text>
      </svg>
    </div>
  );
}

export default function App() {
  return (
    <div className="relative flex h-screen flex-col overflow-hidden bg-[#e6e6e6] font-['Noto_Sans_CJK_SC',sans-serif] text-[12px]">
      <TitleBar />
      <Ribbon />
      <FormulaBar />
      <Grid />
      <SheetBar />
      <StatusBar />
      <Watermark />
    </div>
  );
}
